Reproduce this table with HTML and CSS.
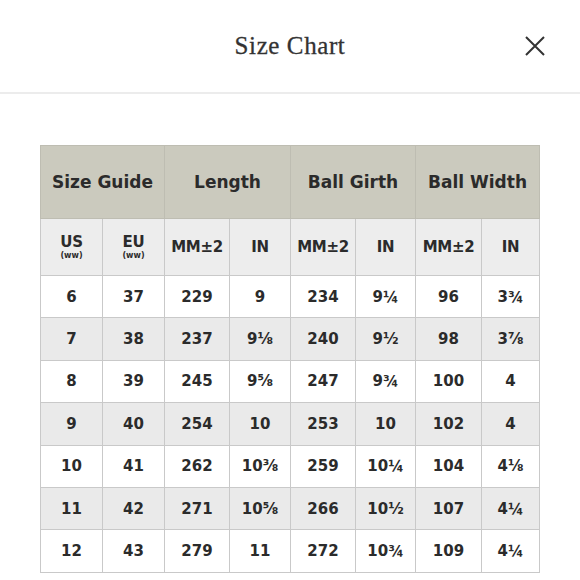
FILE: index.html
```html
<!DOCTYPE html>
<html>
<head>
<meta charset="utf-8">
<link rel="stylesheet" href="styles.css">
</head>
<body>
<header class="topbar">
  <h1 class="title">Size Chart</h1>
  <button class="close" aria-label="Close">
    <svg width="22" height="22" viewBox="0 0 22 22"><path d="M2 2 L20 20 M20 2 L2 20" stroke="#333" stroke-width="2" fill="none"/></svg>
  </button>
</header>
<main class="content">
  <table class="chart">
    <colgroup>
      <col class="c1"><col class="c2"><col class="c3"><col class="c4"><col class="c5"><col class="c6"><col class="c7"><col class="c8">
    </colgroup>
    <thead>
      <tr class="group">
        <th colspan="2">Size Guide</th>
        <th colspan="2">Length</th>
        <th colspan="2">Ball Girth</th>
        <th colspan="2">Ball Width</th>
      </tr>
      <tr class="sub">
        <th><span class="unit">US</span><span class="ww">(ww)</span></th>
        <th><span class="unit">EU</span><span class="ww">(ww)</span></th>
        <th>MM±2</th>
        <th>IN</th>
        <th>MM±2</th>
        <th>IN</th>
        <th>MM±2</th>
        <th>IN</th>
      </tr>
    </thead>
    <tbody>
      <tr><td>6</td><td>37</td><td>229</td><td>9</td><td>234</td><td>9¼</td><td>96</td><td>3¾</td></tr>
      <tr><td>7</td><td>38</td><td>237</td><td>9⅛</td><td>240</td><td>9½</td><td>98</td><td>3⅞</td></tr>
      <tr><td>8</td><td>39</td><td>245</td><td>9⅝</td><td>247</td><td>9¾</td><td>100</td><td>4</td></tr>
      <tr><td>9</td><td>40</td><td>254</td><td>10</td><td>253</td><td>10</td><td>102</td><td>4</td></tr>
      <tr><td>10</td><td>41</td><td>262</td><td>10⅜</td><td>259</td><td>10¼</td><td>104</td><td>4⅛</td></tr>
      <tr><td>11</td><td>42</td><td>271</td><td>10⅝</td><td>266</td><td>10½</td><td>107</td><td>4¼</td></tr>
      <tr><td>12</td><td>43</td><td>279</td><td>11</td><td>272</td><td>10¾</td><td>109</td><td>4¼</td></tr>
    </tbody>
  </table>
</main>
</body>
</html>
```
FILE: styles.css
```css
html, body {
  margin: 0;
  padding: 0;
  background: #ffffff;
}

.topbar {
  height: 94px;
  border-bottom: 2px solid #ececec;
  display: flex;
  align-items: center;
  justify-content: center;
  position: relative;
  box-sizing: border-box;
}

.title {
  margin: 0;
  font-family: "Liberation Serif", "Times New Roman", serif;
  font-weight: normal;
  font-size: 25px;
  color: #333333;
  letter-spacing: 0.6px;
  -webkit-text-stroke: 0.3px #333333;
}

.close {
  position: absolute;
  right: 34px;
  top: 35px;
  background: none;
  border: 0;
  padding: 0;
  width: 22px;
  height: 22px;
  display: block;
}

.content {
  padding: 51px 0 0 40px;
}

.chart {
  border-collapse: collapse;
  table-layout: fixed;
  width: 499px;
  font-family: "DejaVu Sans", "Lato", sans-serif;
  font-weight: bold;
  color: #2b2b2b;
  text-align: center;
}

.c1 { width: 62px; }
.c2 { width: 62px; }
.c3 { width: 65px; }
.c4 { width: 61px; }
.c5 { width: 65px; }
.c6 { width: 60px; }
.c7 { width: 66px; }
.c8 { width: 58px; }

.chart th,
.chart td {
  border: 1px solid #c9c9c9;
  padding: 0;
}

.group th {
  background: #cbcabe;
  height: 72px;
  font-size: 17px;
  border-color: #bebdb2;
}

.sub th {
  background: #ededed;
  height: 56px;
  font-size: 15px;
  letter-spacing: -0.3px;
}

.unit {
  display: block;
  line-height: 15px;
}

.ww {
  display: block;
  font-size: 8px;
  line-height: 9px;
  margin-top: 1px;
  letter-spacing: 0;
}

.chart td {
  height: 41.4px;
  font-size: 15px;
}

.chart tbody tr:nth-child(even) td {
  background: #eaeaea;
}

.chart tbody tr:nth-child(odd) td {
  background: #ffffff;
}
```
